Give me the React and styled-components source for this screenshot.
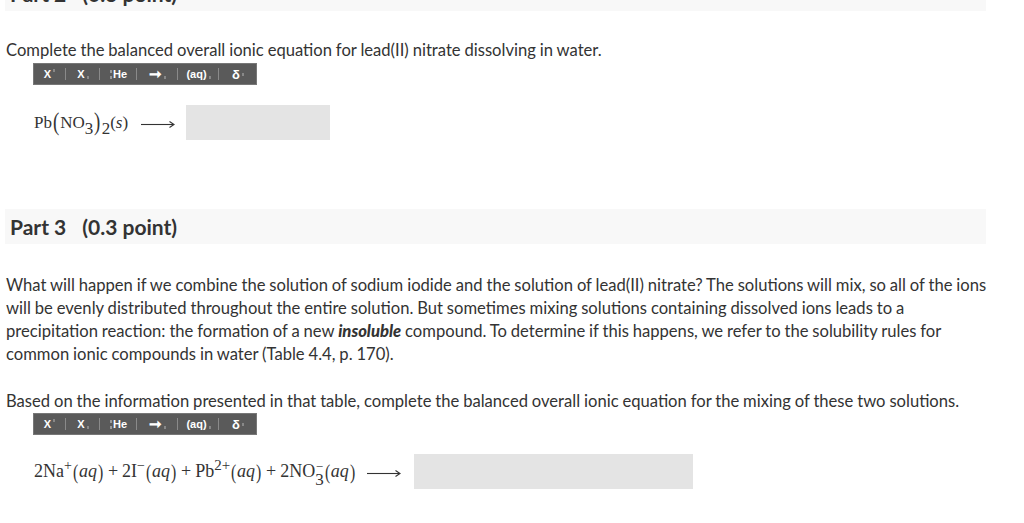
import styled, { createGlobalStyle } from 'styled-components';

const Global = createGlobalStyle`
  body {
    margin: 0;
    background: #fff;
    font-family: Lato, "Liberation Sans", sans-serif;
    color: #333;
  }
`;

const Page = styled.div`
  width: 1024px;
  height: 523px;
  overflow: hidden;
  padding: 0 14px 0 5px;
  box-sizing: border-box;
`;

const Sheet = styled.div`
  margin-top: -24px;
`;

const PartHeader = styled.div`
  height: 35px;
  width: 981px;
  background: #f8f8f8;
  display: flex;
  align-items: center;
  padding-left: 5px;
  box-sizing: border-box;
  margin-top: ${(p) => p.$top || 0}px;
  font-size: 21px;
  font-weight: 700;
  color: #333;
`;

const Points = styled.span`
  margin-left: 16px;
`;

const Text = styled.p`
  margin: ${(p) => p.$top || 0}px 0 0 1px;
  font-size: 16.6px;
  line-height: 23px;
  color: #333;
  word-spacing: -0.35px;
  & b {
    font-weight: 900;
  }
`;

const Toolbar = styled.div`
  display: flex;
  align-items: center;
  width: 224px;
  height: 22px;
  margin: ${(p) => p.$top ?? 1}px 0 0 28px;
  background: #5a5a5a;
  box-shadow: inset 0 0 0 1px #777;
  color: #fff;
  font-family: "Liberation Sans", Arial, sans-serif;
  font-weight: 700;
  font-size: 11px;
`;

const ToolButton = styled.div`
  position: relative;
  width: ${(p) => p.$w}px;
  height: 100%;
  display: flex;
  align-items: center;
  justify-content: center;
  &:not(:last-child)::after {
    content: '';
    position: absolute;
    right: 0;
    top: 5px;
    bottom: 5px;
    width: 1px;
    background: #8a8a8a;
  }
`;

const Mark = styled.span`
  display: inline-block;
  width: 2px;
  height: 3px;
  background: #888;
  margin-left: 2px;
  align-self: ${(p) => p.$pos || 'center'};
  margin-top: ${(p) => (p.$pos === 'flex-start' ? '6px' : 0)};
  margin-bottom: ${(p) => (p.$pos === 'flex-end' ? '6px' : 0)};
`;

const Stack = styled.span`
  display: inline-flex;
  flex-direction: column;
  gap: 3px;
  margin-right: 1px;
  & > i {
    width: 2px;
    height: 3px;
    background: #999;
  }
`;

const EqRow = styled.div`
  display: flex;
  align-items: center;
  margin: ${(p) => p.$top}px 0 0 29px;
`;

const Eq = styled.div`
  font-family: "Liberation Serif", "Times New Roman", serif;
  font-size: ${(p) => p.$size || 17}px;
  height: 35px;
  line-height: 35px;
  color: #333;
  white-space: nowrap;
`;

const Paren = styled.span`
  font-size: ${(p) => p.$size || 25}px;
  display: inline-block;
  transform: scaleX(0.75);
  vertical-align: -2px;
  line-height: 0;
`;

const Sub = styled.span`
  font-size: 17px;
  vertical-align: -6px;
  line-height: 0;
`;

const Sup = styled.span`
  font-size: ${(p) => p.$size || 14}px;
  vertical-align: 7px;
  line-height: 0;
`;

const Script = styled.span`
  display: inline-flex;
  flex-direction: column;
  align-items: center;
  line-height: 1;
  vertical-align: 6px;
  & > span:first-child {
    font-size: 13px;
    margin-bottom: -2px;
  }
  & > span:last-child {
    font-size: 17px;
  }
`;

const It = styled.i`
  font-style: italic;
`;

const Op = styled.span`
  margin: 0 4px;
`;

const ArrowSvg = styled.svg`
  display: inline-block;
  vertical-align: middle;
  margin: 0 ${(p) => p.$after || 11}px 0 ${(p) => p.$gap || 12}px;
`;

const AnswerBox = styled.div`
  width: ${(p) => p.$w}px;
  height: 35px;
  background: #e4e4e4;
`;

function Arrow({ gap, after }) {
  return (
    <ArrowSvg $gap={gap} $after={after} width="34" height="10" viewBox="0 0 34 10">
      <path d="M0 5.5H32" stroke="#333" strokeWidth="1.1" />
      <path d="M28.5 2.5L33 5.5L28.5 8.5" stroke="#333" strokeWidth="1.1" fill="none" />
    </ArrowSvg>
  );
}

function Tools({ top }) {
  return (
    <Toolbar $top={top}>
      <ToolButton $w={33}>X<Mark $pos="flex-start" /></ToolButton>
      <ToolButton $w={34}>X<Mark $pos="flex-end" /></ToolButton>
      <ToolButton $w={37}><Stack><i /><i /></Stack>He</ToolButton>
      <ToolButton $w={41}><span style={{ fontSize: 15 }}>➞</span><Mark $pos="flex-end" /></ToolButton>
      <ToolButton $w={41}>(aq)<Mark $pos="flex-end" /></ToolButton>
      <ToolButton $w={38}><span style={{ fontSize: 13 }}>δ</span><Mark /></ToolButton>
    </Toolbar>
  );
}

function Aq() {
  return (
    <>
      <Paren $size={21}>(</Paren><It>aq</It><Paren $size={21}>)</Paren>
    </>
  );
}

function App() {
  return (
    <Page>
      <Global />
      <Sheet>
        <PartHeader>Part 2<Points>(0.3 point)</Points></PartHeader>
        <Text $top={28}>Complete the balanced overall ionic equation for lead(II) nitrate dissolving in water.</Text>
        <Tools />
        <EqRow $top={20}>
          <Eq>
            Pb<Paren>(</Paren>NO<Sub>3</Sub><Paren>)</Paren><Sub>2</Sub>(<It>s</It>)
            <Arrow gap={13} />
          </Eq>
          <AnswerBox $w={144} />
        </EqRow>
        <PartHeader $top={69}>Part 3<Points>(0.3 point)</Points></PartHeader>
        <Text $top={30}>
          What will happen if we combine the solution of sodium iodide and the solution of lead(II) nitrate? The solutions will mix, so all of the ions<br />
          will be evenly distributed throughout the entire solution. But sometimes mixing solutions containing dissolved ions leads to a<br />
          precipitation reaction: the formation of a new <b><i>insoluble</i></b> compound. To determine if this happens, we refer to the solubility rules for<br />
          common ionic compounds in water (Table 4.4, p. 170).
        </Text>
        <Text $top={24}>Based on the information presented in that table, complete the balanced overall ionic equation for the mixing of these two solutions.</Text>
        <Tools top={0} />
        <EqRow $top={19}>
          <Eq $size={18}>
            2Na<Sup>+</Sup><Aq /><Op>+</Op>2I<Sup>−</Sup><Aq /><Op>+</Op>Pb<Sup $size={15}>2+</Sup><Aq /><Op>+</Op>2NO<Script><span>−</span><span>3</span></Script><Aq />
            <Arrow gap={11} after={13} />
          </Eq>
          <AnswerBox $w={279} />
        </EqRow>
      </Sheet>
    </Page>
  );
}

export default App;
